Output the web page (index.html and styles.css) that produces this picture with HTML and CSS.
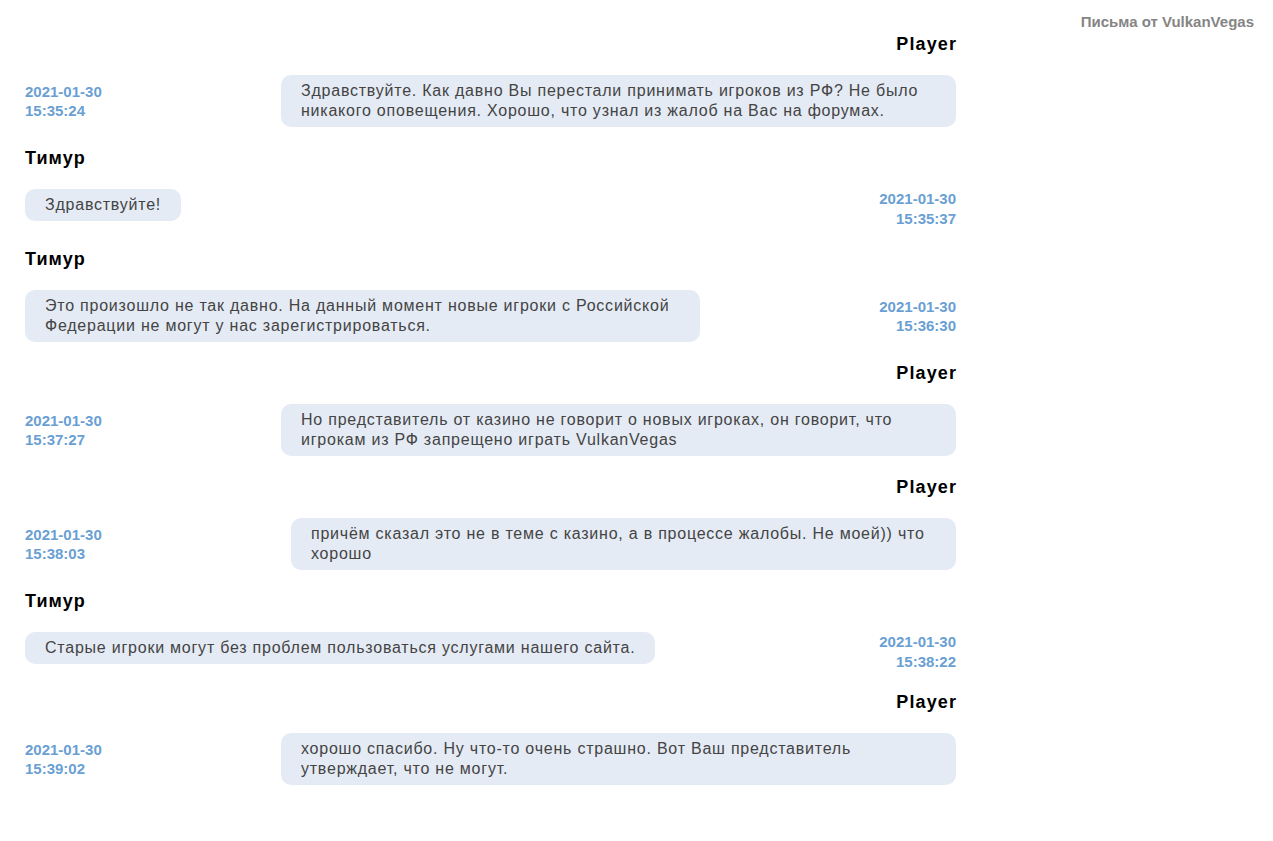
FILE: index.html
```html
<!DOCTYPE html>
<html lang="ru">
<head>
    <meta charset="UTF-8">
    <meta name="viewport" content="width=device-width, initial-scale=1.0">
    <title>Письма от VulkanVegas</title>
    <link rel="stylesheet" href="styles.css">
</head>
<body>
    <div class="page">
        <div class="chat">
            <div class="message player">
                <div class="author">Player</div>
                <div class="row">
                    <div class="date">2021-01-30<br>15:35:24</div>
                    <div class="bubble">Здравствуйте. Как давно Вы перестали принимать игроков из РФ? Не было никакого оповещения. Хорошо, что узнал из жалоб на Вас на форумах.</div>
                </div>
            </div>
            <div class="message casino">
                <div class="author">Тимур</div>
                <div class="row">
                    <div class="bubble">Здравствуйте!</div>
                    <div class="date">2021-01-30<br>15:35:37</div>
                </div>
            </div>
            <div class="message casino">
                <div class="author">Тимур</div>
                <div class="row">
                    <div class="bubble">Это произошло не так давно. На данный момент новые игроки с Российской Федерации не могут у нас зарегистрироваться.</div>
                    <div class="date">2021-01-30<br>15:36:30</div>
                </div>
            </div>
            <div class="message player">
                <div class="author">Player</div>
                <div class="row">
                    <div class="date">2021-01-30<br>15:37:27</div>
                    <div class="bubble">Но представитель от казино не говорит о новых игроках, он говорит, что игрокам из РФ запрещено играть VulkanVegas</div>
                </div>
            </div>
            <div class="message player">
                <div class="author">Player</div>
                <div class="row">
                    <div class="date">2021-01-30<br>15:38:03</div>
                    <div class="bubble narrow">причём сказал это не в теме с казино, а в процессе жалобы. Не моей)) что хорошо</div>
                </div>
            </div>
            <div class="message casino">
                <div class="author">Тимур</div>
                <div class="row">
                    <div class="bubble">Старые игроки могут без проблем пользоваться услугами нашего сайта.</div>
                    <div class="date">2021-01-30<br>15:38:22</div>
                </div>
            </div>
            <div class="message player">
                <div class="author">Player</div>
                <div class="row">
                    <div class="date">2021-01-30<br>15:39:02</div>
                    <div class="bubble">хорошо спасибо. Ну что-то очень страшно. Вот Ваш представитель утверждает, что не могут.</div>
                </div>
            </div>
        </div>
        <div class="title">Письма от VulkanVegas</div>
    </div>
</body>
</html>
```

FILE: styles.css
```css
body {
    font-family: "Liberation Sans", Arial, sans-serif;
    margin: 0;
    background-color: #fff;
    color: #444;
}
.page {
    display: flex;
    justify-content: space-between;
    align-items: flex-start;
    padding: 12px 19px 0 25px;
}
.title {
    font-size: 15px;
    line-height: 20px;
    font-weight: bold;
    color: #858585;
}
.chat {
    width: 931px;
    padding-top: 21px;
}
.message {
    margin-bottom: 20px;
}
.author {
    font-size: 18px;
    line-height: 22px;
    font-weight: bold;
    letter-spacing: 1.1px;
    color: #000;
    margin-bottom: 20px;
}
.player .author {
    text-align: right;
    margin-right: -1px;
}
.row {
    display: flex;
    justify-content: space-between;
    align-items: center;
}
.date {
    font-size: 15px;
    line-height: 19.5px;
    font-weight: bold;
    color: #6a9fd3;
}
.casino .date {
    text-align: right;
}
.bubble {
    align-self: flex-start;
    max-width: 635px;
    padding: 6px 20px;
    font-size: 16px;
    line-height: 20px;
    letter-spacing: 0.77px;
    background-color: #e4ebf5;
    border-radius: 10px;
}
.bubble.narrow {
    max-width: 625px;
}
```
